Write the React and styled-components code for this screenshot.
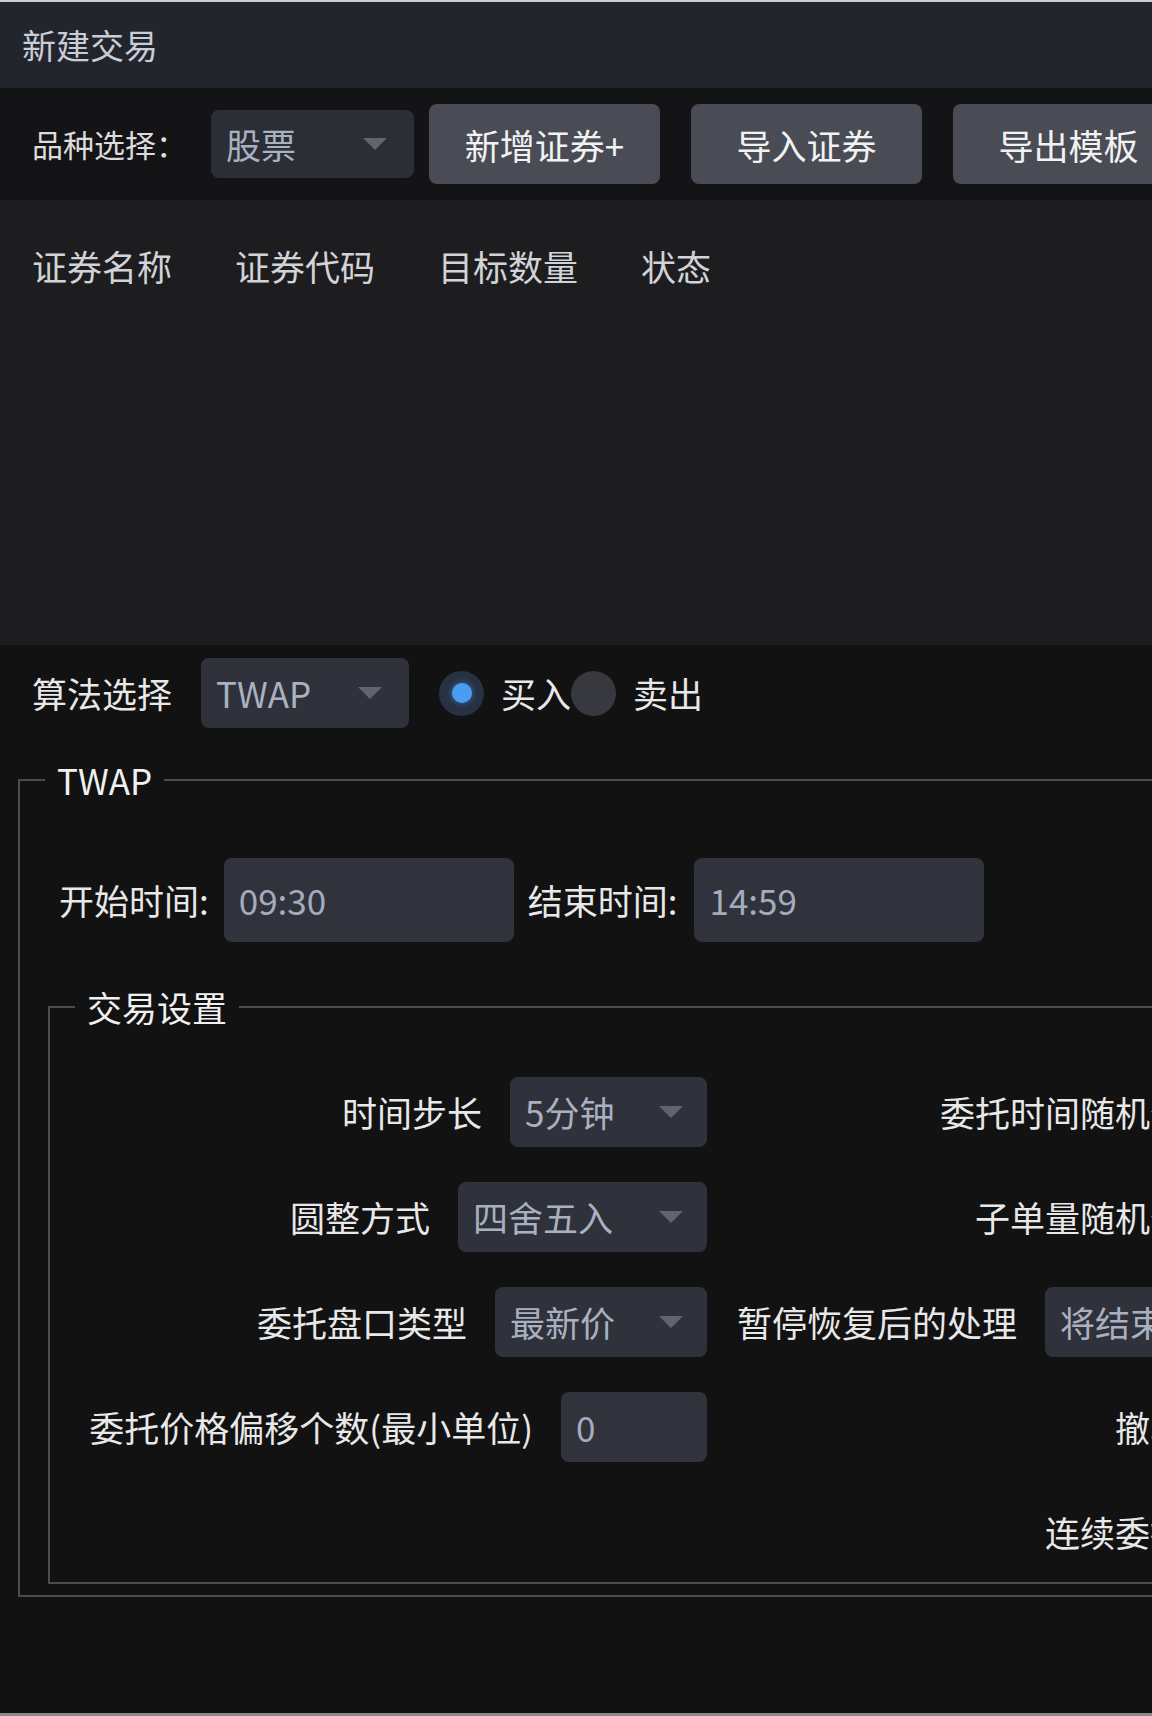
import styled, { createGlobalStyle } from "styled-components";

const GlobalStyle = createGlobalStyle`
  html, body {
    margin: 0;
    padding: 0;
    overflow: hidden;
    background: #121213;
  }
  * {
    box-sizing: border-box;
  }
`;

const Window = styled.div`
  width: 1152px;
  height: 1716px;
  display: flex;
  flex-direction: column;
  overflow: hidden;
  border-top: 2px solid #cfcfcf;
  border-bottom: 3px solid #8c8c8c;
  background: #121213;
  font-family: "Noto Sans CJK SC", "Noto Sans", sans-serif;
  color: #e8e8e8;
  font-size: 35px;
  line-height: 44px;
`;

const TitleBar = styled.div`
  height: 86px;
  flex-shrink: 0;
  display: flex;
  align-items: center;
  padding-left: 22px;
  background: #23252d;
  color: #c9cdd6;
  font-size: 34px;
`;

const Toolbar = styled.div`
  height: 112px;
  flex-shrink: 0;
  display: flex;
  align-items: center;
  padding-left: 32px;
  background: #141417;
`;

const ToolLabel = styled.span`
  font-size: 31px;
  color: #dcdcdc;
  margin-right: 24px;
  white-space: nowrap;
`;

const Button = styled.button`
  flex-shrink: 0;
  width: 231px;
  height: 80px;
  margin-left: ${(p) => p.$gap}px;
  border: none;
  border-radius: 8px;
  background: #4a4c55;
  color: #f2f2f2;
  font-family: inherit;
  font-size: 35px;
  white-space: nowrap;
`;

const Table = styled.div`
  height: 445px;
  flex-shrink: 0;
  padding: 44px 0 0 32px;
  background: #1d1d20;
`;

const HeaderRow = styled.div`
  display: grid;
  grid-template-columns: repeat(4, 203px);
  color: #d2d3d6;
`;

const Body = styled.div`
  flex: 1;
  padding-top: 13px;
`;

const AlgoRow = styled.div`
  display: flex;
  align-items: center;
  height: 70px;
  padding-left: 32px;
`;

const Label = styled.span`
  white-space: nowrap;
  flex-shrink: 0;
`;

const SelectBox = styled.div`
  flex-shrink: 0;
  display: flex;
  align-items: center;
  justify-content: space-between;
  width: ${(p) => p.$w}px;
  height: ${(p) => p.$h || 70}px;
  margin-left: ${(p) => p.$ml || 0}px;
  padding: 0 ${(p) => p.$pr || 24}px 0 15px;
  border-radius: 8px;
  background: ${(p) => p.$bg || "#2f323a"};
  color: #a9b1c1;
  white-space: nowrap;
  overflow: hidden;
`;

const Caret = styled.span`
  flex-shrink: 0;
  width: 0;
  height: 0;
  border-left: 12px solid transparent;
  border-right: 12px solid transparent;
  border-top: 12px solid #5f646e;
`;

const RadioGroup = styled.div`
  display: flex;
  align-items: center;
  margin-left: 30px;
`;

const RadioOption = styled.label`
  display: flex;
  align-items: center;
  gap: 17px;
  white-space: nowrap;
`;

const RadioDot = styled.span`
  width: 45px;
  height: 45px;
  border-radius: 50%;
  display: flex;
  align-items: center;
  justify-content: center;
  background: ${(p) => (p.$checked ? "#283142" : "#38393e")};

  &::after {
    content: "";
    display: ${(p) => (p.$checked ? "block" : "none")};
    width: 20px;
    height: 20px;
    border-radius: 50%;
    background: #4b9df2;
    box-shadow: 0 0 6px rgba(75, 157, 242, 0.6);
  }
`;

const Group = styled.fieldset`
  width: ${(p) => p.$w}px;
  min-width: 0;
  margin: ${(p) => p.$margin};
  padding: ${(p) => p.$pad || "0"};
  border: 2px solid #4d4d50;
`;

const Legend = styled.legend`
  margin-left: 25px;
  padding: 0 12px;
  color: #f0f0f0;
  font-size: 35px;
  line-height: 44px;
`;

const TimeRow = styled.div`
  display: flex;
  align-items: center;
  margin-top: 56px;
  padding-left: 39px;
`;

const InputBox = styled.div`
  flex-shrink: 0;
  display: flex;
  align-items: center;
  width: ${(p) => p.$w}px;
  height: ${(p) => p.$h}px;
  margin: 0 ${(p) => p.$mr || 0}px 0 ${(p) => p.$ml || 0}px;
  padding-left: 15px;
  border-radius: 8px;
  background: #30333c;
  color: #a4acbc;
`;

const SettingsGrid = styled.div`
  display: grid;
  grid-template-columns: 657px 514px;
  grid-auto-rows: 70px;
  column-gap: 28px;
  row-gap: 35px;
  margin-top: 48px;
`;

const Cell = styled.div`
  display: flex;
  align-items: center;
  justify-content: flex-end;
  gap: 28px;
`;

const Checkbox = styled.span`
  flex-shrink: 0;
  width: 36px;
  height: 36px;
  border: 2px solid #5a5c63;
  border-radius: 4px;
  background: #2a2c33;
`;

const Select = ({ value, w, ...rest }) => (
  <SelectBox $w={w} {...rest}>
    <span>{value}</span>
    <Caret />
  </SelectBox>
);

const leftRows = [
  { label: "时间步长", value: "5分钟", w: 197 },
  { label: "圆整方式", value: "四舍五入", w: 249 },
  { label: "委托盘口类型", value: "最新价", w: 212 },
  { label: "委托价格偏移个数(最小单位)", value: "0", w: 146, input: true },
];

const rightRows = [
  { label: "委托时间随机化" },
  { label: "子单量随机化" },
  { label: "暂停恢复后的处理", value: "将结束时间顺延", w: 204 },
  { label: "撤单" },
  { label: "连续委托" },
];

const App = () => {
  const cells = [];
  for (let i = 0; i < 5; i++) {
    const l = leftRows[i];
    const r = rightRows[i];
    cells.push(
      <Cell key={"l" + i}>
        {l && <Label>{l.label}</Label>}
        {l &&
          (l.input ? (
            <InputBox $w={l.w} $h={70}>
              {l.value}
            </InputBox>
          ) : (
            <Select value={l.value} w={l.w} />
          ))}
      </Cell>
    );
    cells.push(
      <Cell key={"r" + i}>
        <Label>{r.label}</Label>
        {r.value ? <Select value={r.value} w={r.w} /> : <Checkbox />}
      </Cell>
    );
  }

  return (
    <>
      <GlobalStyle />
      <Window>
        <TitleBar>新建交易</TitleBar>
        <Toolbar>
          <ToolLabel>品种选择：</ToolLabel>
          <Select value="股票" w={203} $h={68} $bg="#2c2e35" $pr={27} />
          <Button $gap={15}>新增证券+</Button>
          <Button $gap={31}>导入证券</Button>
          <Button $gap={31}>导出模板</Button>
        </Toolbar>
        <Table>
          <HeaderRow>
            <span>证券名称</span>
            <span>证券代码</span>
            <span>目标数量</span>
            <span>状态</span>
          </HeaderRow>
        </Table>
        <Body>
          <AlgoRow>
            <Label>算法选择</Label>
            <Select value="TWAP" w={208} $ml={29} $pr={27} />
            <RadioGroup>
              <RadioOption>
                <RadioDot $checked />
                买入
              </RadioOption>
              <RadioOption>
                <RadioDot />
                卖出
              </RadioOption>
            </RadioGroup>
          </AlgoRow>
          <Group $w={1500} $margin="30px 0 0 18px">
            <Legend>TWAP</Legend>
            <TimeRow>
              <Label>开始时间:</Label>
              <InputBox $w={290} $h={84} $ml={15} $mr={14}>
                09:30
              </InputBox>
              <Label>结束时间:</Label>
              <InputBox $w={290} $h={84} $ml={17}>
                14:59
              </InputBox>
            </TimeRow>
            <Group $w={1400} $margin="43px 0 11px 28px" $pad="0 0 15px 0">
              <Legend>交易设置</Legend>
              <SettingsGrid>{cells}</SettingsGrid>
            </Group>
          </Group>
        </Body>
      </Window>
    </>
  );
};

export default App;
